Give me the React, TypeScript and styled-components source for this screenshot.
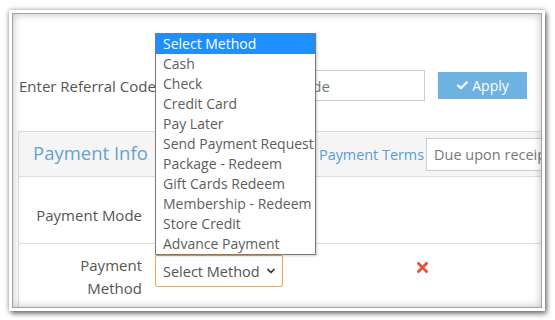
import React from 'react'
import styled, { createGlobalStyle } from 'styled-components'
import { Check, ChevronDown } from 'lucide-react'

const GlobalStyle = createGlobalStyle`
  html, body {
    margin: 0;
    padding: 0;
    background: #ffffff;
  }
  body {
    font-family: 'Open Sans', 'Liberation Sans', sans-serif;
    font-size: 14px;
    color: #555555;
  }
`

const Page = styled.div`
  width: 555px;
  height: 320px;
  padding: 10px 0 0 9px;
  box-sizing: border-box;
  overflow: hidden;
`

const Frame = styled.div`
  width: 536px;
  height: 301px;
  box-sizing: border-box;
  padding: 3px;
  background: #ffffff;
  box-shadow: 0 0 5px rgba(0, 0, 0, 0.35), 2px 3px 5px rgba(0, 0, 0, 0.45);
`

const Screen = styled.div`
  position: relative;
  height: 100%;
  box-sizing: border-box;
  border: 1px solid #a2a2a2;
  background: #ffffff;
  overflow: hidden;

  &::after {
    content: '';
    position: absolute;
    inset: 0;
    pointer-events: none;
    box-shadow: inset 0 0 9px rgba(0, 0, 0, 0.25);
  }
`

const ReferralRow = styled.div`
  display: flex;
  align-items: center;
  padding: 56px 0 30px 6px;
`

const ReferralLabel = styled.label`
  width: 161px;
  flex-shrink: 0;
  font-size: 15px;
  white-space: nowrap;
  color: #555555;
`

const TextInput = styled.div<{ $width: number; $height: number; $pad: number; $size: number }>`
  display: flex;
  align-items: center;
  width: ${(p) => p.$width}px;
  height: ${(p) => p.$height}px;
  flex-shrink: 0;
  box-sizing: border-box;
  padding: 0 ${(p) => p.$pad}px;
  border: 1px solid #cccccc;
  background: #ffffff;
  font-size: ${(p) => p.$size}px;
  color: #777777;
  white-space: nowrap;
  overflow: hidden;
`

const ApplyButton = styled.button`
  display: flex;
  align-items: center;
  justify-content: center;
  gap: 3px;
  width: 89px;
  height: 27px;
  margin-left: 13px;
  border: none;
  background: #6db2e0;
  color: #ffffff;
  font-family: 'Open Sans', 'Liberation Sans', sans-serif;
  font-size: 14px;
  padding: 0;
`

const Panel = styled.div`
  margin-left: 5px;
  width: 700px;
  border: 1px solid #dddddd;
`

const PanelHeader = styled.div`
  display: flex;
  align-items: center;
  height: 44px;
  background: #f5f5f5;
  border-bottom: 1px solid #dddddd;
`

const PanelTitle = styled.h3`
  width: 300px;
  box-sizing: border-box;
  margin: 0 0 3px;
  padding-left: 14px;
  font-size: 18.5px;
  font-weight: 400;
  color: #6a9fcf;
`

const TermsLabel = styled.span`
  width: 107px;
  flex-shrink: 0;
  font-size: 14.4px;
  white-space: nowrap;
  color: #5a9bd3;
`

const Row = styled.div<{ $height: number; $labelTop: number }>`
  display: grid;
  grid-template-columns: 131px 1fr;
  height: ${(p) => p.$height}px;
  border-bottom: 1px solid #dddddd;

  > label {
    padding-top: ${(p) => p.$labelTop}px;
  }
`

const RowLabel = styled.label`
  box-sizing: border-box;
  padding-right: 8px;
  text-align: right;
  font-size: 15px;
  line-height: 23px;
  color: #555555;
`

const RowValue = styled.div`
  display: flex;
  align-items: flex-start;
  padding: 11px 0 0 5px;
`

const Select = styled.div`
  display: flex;
  align-items: center;
  justify-content: space-between;
  width: 128px;
  height: 32px;
  box-sizing: border-box;
  padding: 0 5px 0 7px;
  border: 1px solid #f0a759;
  border-radius: 2px;
  font-size: 14.5px;
  white-space: nowrap;
  color: #555555;
`

const RemoveIcon = styled.span`
  display: flex;
  margin: 7px 0 0 134px;
`

const Dropdown = styled.ul`
  position: absolute;
  left: 142px;
  top: 19px;
  width: 161px;
  margin: 0;
  padding: 0;
  list-style: none;
  box-sizing: border-box;
  border: 1px solid #7a7a7a;
  background: #ffffff;
  box-shadow: 1px 1px 2px rgba(0, 0, 0, 0.2);
`

const Option = styled.li<{ $active?: boolean }>`
  height: 20px;
  line-height: 20px;
  padding-left: 7px;
  font-size: 14px;
  white-space: nowrap;
  color: ${(p) => (p.$active ? '#ffffff' : '#5d5d5d')};
  background: ${(p) => (p.$active ? '#1e8fff' : 'transparent')};
`

const METHODS = [
  'Select Method',
  'Cash',
  'Check',
  'Credit Card',
  'Pay Later',
  'Send Payment Request',
  'Package - Redeem',
  'Gift Cards Redeem',
  'Membership - Redeem',
  'Store Credit',
  'Advance Payment',
]

const TimesIcon = () => (
  <svg width="11" height="11" viewBox="0 0 11 11">
    <path d="M1.5 1.5 L9.5 9.5 M9.5 1.5 L1.5 9.5" stroke="#e4553a" strokeWidth="3" strokeLinecap="square" />
  </svg>
)

export default function App() {
  return (
    <>
      <GlobalStyle />
      <Page>
        <Frame>
          <Screen>
            <ReferralRow>
              <ReferralLabel>Enter Referral Code</ReferralLabel>
              <TextInput $width={245} $height={31} $pad={12} $size={15}>
                Enter Referral Code
              </TextInput>
              <ApplyButton>
                <Check size={13} strokeWidth={4} />
                Apply
              </ApplyButton>
            </ReferralRow>

            <Panel>
              <PanelHeader>
                <PanelTitle>Payment Info</PanelTitle>
                <TermsLabel>Payment Terms</TermsLabel>
                <TextInput $width={200} $height={33} $pad={7} $size={14.5}>
                  Due upon receipt
                </TextInput>
              </PanelHeader>

              <Row $height={66} $labelTop={27}>
                <RowLabel>Payment Mode</RowLabel>
                <RowValue />
              </Row>

              <Row $height={80} $labelTop={10}>
                <RowLabel>
                  Payment
                  <br />
                  Method
                </RowLabel>
                <RowValue>
                  <Select>
                    Select Method
                    <ChevronDown size={12} strokeWidth={3.5} color="#333" />
                  </Select>
                  <RemoveIcon>
                    <TimesIcon />
                  </RemoveIcon>
                </RowValue>
              </Row>
            </Panel>

            <Dropdown>
              {METHODS.map((m, i) => (
                <Option key={m} $active={i === 0}>
                  {m}
                </Option>
              ))}
            </Dropdown>
          </Screen>
        </Frame>
      </Page>
    </>
  )
}
